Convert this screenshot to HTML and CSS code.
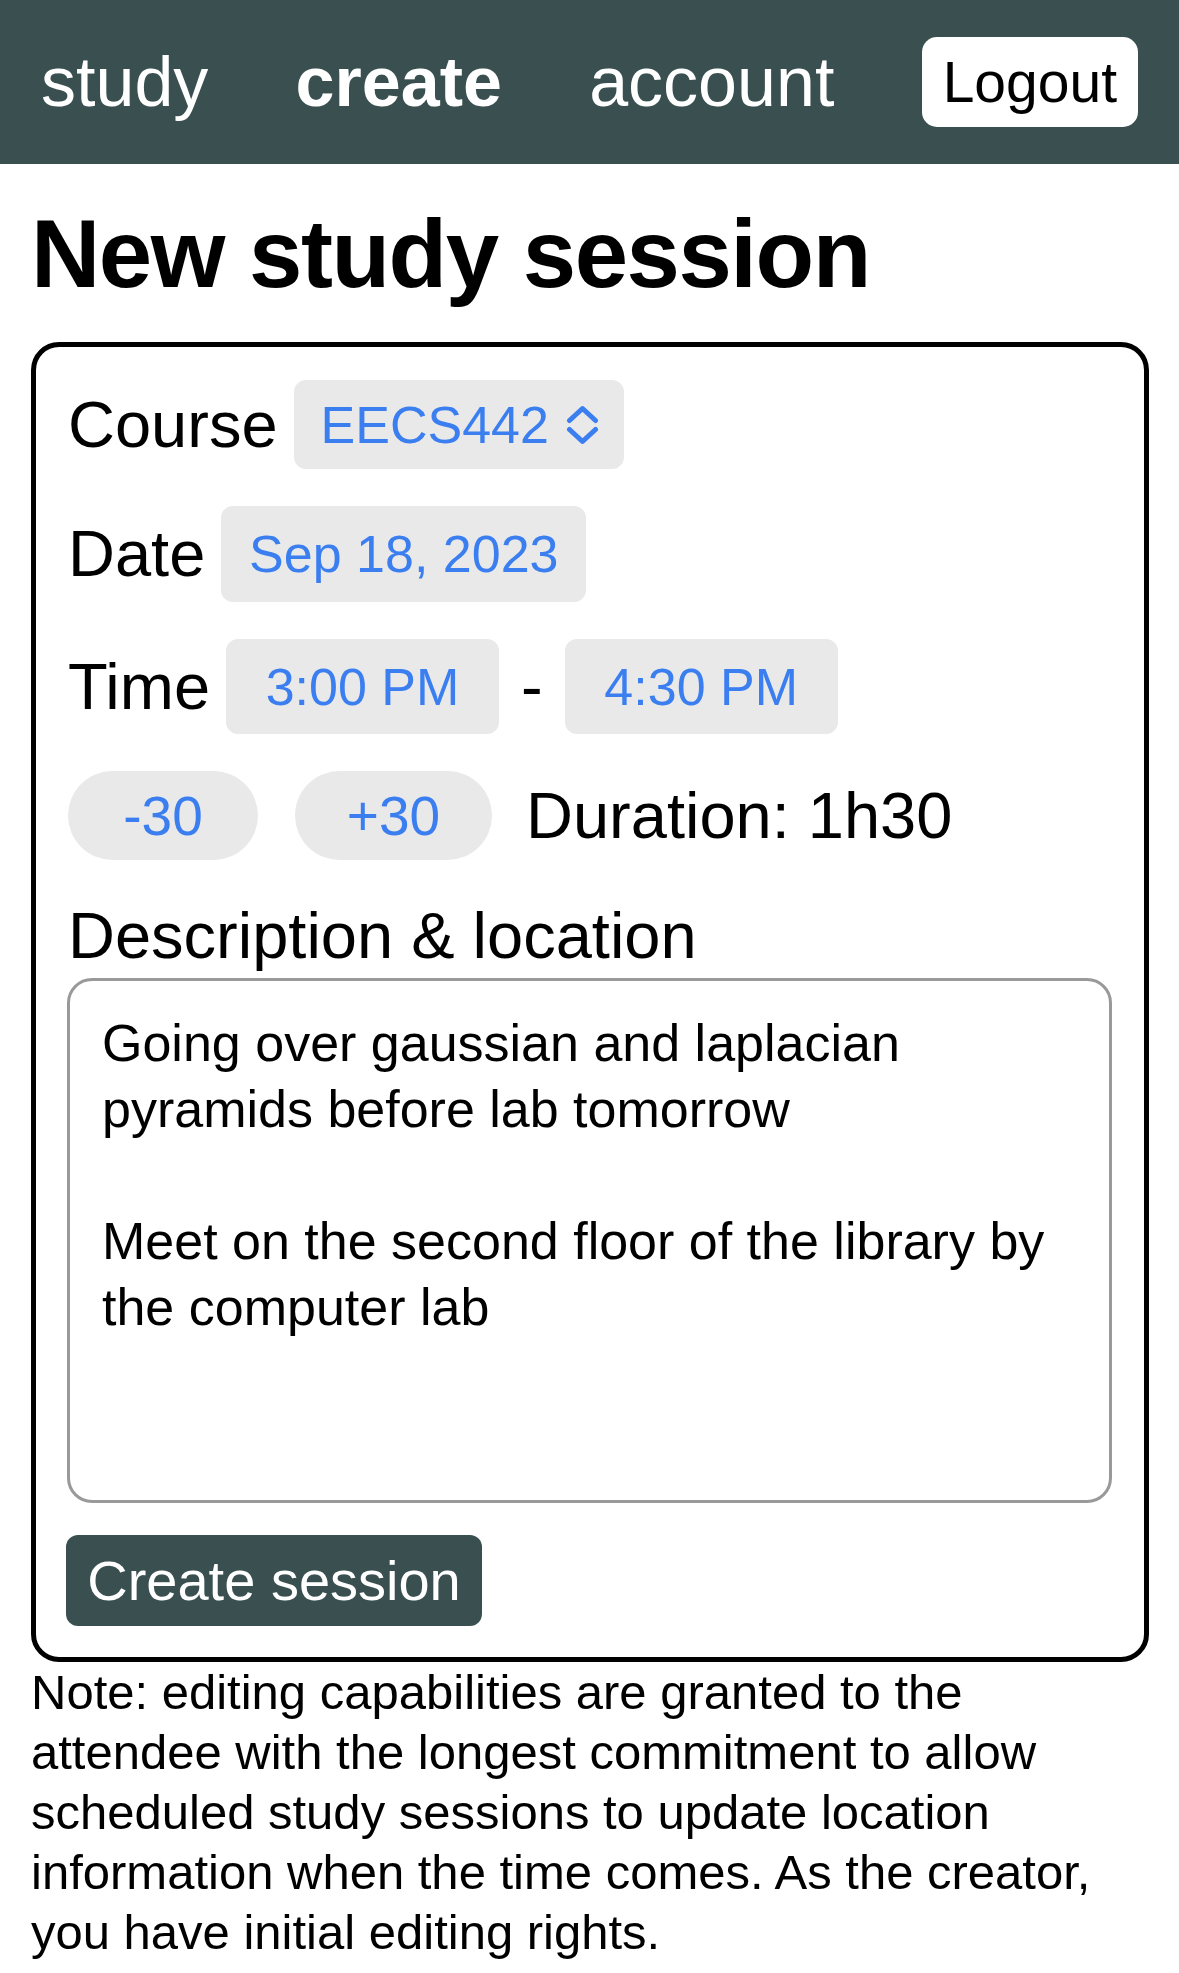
FILE: index.html
```html
<!DOCTYPE html>
<html lang="en">
<head>
<meta charset="utf-8">
<title>New study session</title>
<link rel="stylesheet" href="styles.css">
</head>
<body>
<nav class="topnav">
  <a class="nav-link" href="#">study</a>
  <a class="nav-link active" href="#">create</a>
  <a class="nav-link" href="#">account</a>
  <button class="logout" type="button">Logout</button>
</nav>
<main class="page">
  <h1 class="title">New study session</h1>
  <form class="card">
    <div class="fields">
      <div class="row">
        <span class="label">Course</span>
        <div class="field select">
          <span>EECS442</span>
          <svg class="chevrons" width="33" height="40" viewBox="0 0 33 40" aria-hidden="true">
            <path d="M3.5 15.5 L16.5 3.5 L29.5 15.5" fill="none" stroke="currentColor" stroke-width="5" stroke-linecap="round" stroke-linejoin="round"/>
            <path d="M3.5 24.5 L16.5 36.5 L29.5 24.5" fill="none" stroke="currentColor" stroke-width="5" stroke-linecap="round" stroke-linejoin="round"/>
          </svg>
        </div>
      </div>
      <div class="row">
        <span class="label">Date</span>
        <div class="field date">Sep 18, 2023</div>
      </div>
      <div class="row">
        <span class="label">Time</span>
        <div class="field time">3:00 PM</div>
        <span class="label dash">-</span>
        <div class="field time">4:30 PM</div>
      </div>
      <div class="row pills">
        <button class="pill minus" type="button">-30</button>
        <button class="pill plus" type="button">+30</button>
        <span class="label duration">Duration: 1h30</span>
      </div>
    </div>
    <label class="label desc-label" for="desc">Description &amp; location</label>
    <textarea id="desc" class="desc">Going over gaussian and laplacian pyramids before lab tomorrow

Meet on the second floor of the library by the computer lab</textarea>
    <button class="create" type="button">Create session</button>
  </form>
  <p class="note">Note: editing capabilities are granted to the attendee with the longest commitment to allow scheduled study sessions to update location information when the time comes. As the creator, you have initial editing rights.</p>
</main>
</body>
</html>
```
FILE: styles.css
```css
* { box-sizing: border-box; }

body {
  margin: 0;
  font-family: "Liberation Sans", Arial, sans-serif;
  color: #000;
  background: #fff;
}

.topnav {
  height: 164px;
  background: #3a5050;
  display: flex;
  align-items: center;
  justify-content: space-between;
  padding: 0 41px;
}

.nav-link {
  font-size: 70px;
  line-height: 70px;
  color: #fff;
  text-decoration: none;
}

.nav-link.active { font-weight: 700; }

.logout {
  height: 90px;
  padding: 0 21px;
  background: #fff;
  color: #000;
  border: none;
  border-radius: 15px;
  font-family: "Liberation Sans", Arial, sans-serif;
  font-size: 57px;
  line-height: 57px;
}

.page { padding: 0 30px 0 31px; }

.title {
  margin: 36px 0 34px;
  font-size: 96px;
  line-height: 108px;
  font-weight: 700;
  letter-spacing: -1.5px;
}

.card {
  border: 5px solid #000;
  border-radius: 28px;
  padding: 33px 32px 31px;
}

.fields {
  display: flex;
  flex-direction: column;
  gap: 37px;
}

.row {
  display: flex;
  align-items: center;
  gap: 16px;
}

.label {
  font-size: 65px;
  line-height: 76px;
}

.dash { margin: 0 6px; }

.field {
  display: flex;
  align-items: center;
  justify-content: center;
  background: #e9e9ea;
  color: #3a7ef0;
  font-size: 52px;
  border-radius: 12px;
}

.select {
  width: 330px;
  height: 89px;
  padding: 0 25px 0 27px;
  justify-content: space-between;
}

.chevrons { display: block; }

.date { width: 365px; height: 96px; }

.time { width: 273px; height: 95px; }

.pills { gap: 37px; }

.pill {
  height: 89px;
  border: none;
  border-radius: 45px;
  background: #e9e9ea;
  color: #3a7ef0;
  font-family: "Liberation Sans", Arial, sans-serif;
  font-size: 55px;
  padding: 0;
}

.minus { width: 190px; }
.plus { width: 197px; }

.duration { margin-left: -3px; }

.desc-label {
  display: block;
  margin-top: 38px;
}

.desc {
  display: block;
  width: 1045px;
  height: 525px;
  margin: 4px 0 0 -1px;
  border: 3px solid #999;
  border-radius: 25px;
  padding: 29px 32px;
  font-family: "Liberation Sans", Arial, sans-serif;
  font-size: 52px;
  line-height: 66px;
  color: #000;
  resize: none;
  outline: none;
  overflow: hidden;
}

.create {
  display: block;
  width: 416px;
  height: 91px;
  margin: 32px 0 0 -2px;
  padding: 0;
  border: none;
  border-radius: 12px;
  background: #3a5050;
  color: #fff;
  font-family: "Liberation Sans", Arial, sans-serif;
  font-size: 56px;
}

.note {
  margin: 0;
  font-size: 49px;
  line-height: 60px;
}
```
